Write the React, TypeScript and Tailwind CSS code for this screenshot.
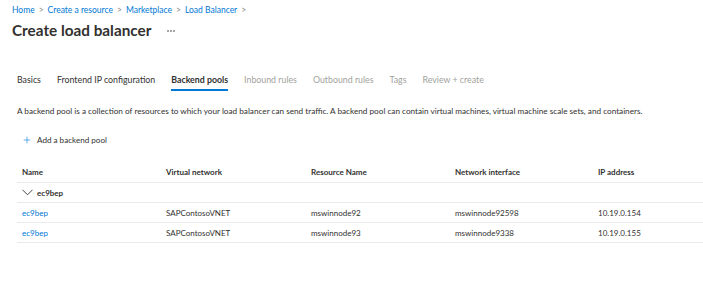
import { Plus } from "lucide-react";

const crumbs = ["Home", "Create a resource", "Marketplace", "Load Balancer"];

const tabs = [
  { label: "Basics", state: "done" },
  { label: "Frontend IP configuration", state: "done" },
  { label: "Backend pools", state: "active" },
  { label: "Inbound rules", state: "off" },
  { label: "Outbound rules", state: "off" },
  { label: "Tags", state: "off" },
  { label: "Review + create", state: "off" },
];

const rows = [
  { name: "ec9bep", vnet: "SAPContosoVNET", resource: "mswinnode92", nic: "mswinnode92598", ip: "10.19.0.154" },
  { name: "ec9bep", vnet: "SAPContosoVNET", resource: "mswinnode93", nic: "mswinnode9338", ip: "10.19.0.155" },
];

const cols = "grid grid-cols-[144px_145px_144px_143px_1fr]";

export default function App() {
  return (
    <div className="h-[300px] w-[703px] overflow-hidden bg-white font-['Lato',sans-serif] text-[#323130]">
      <nav className="flex items-center gap-[4px] px-3 pt-[4px] text-[8.5px] leading-[13px]">
        {crumbs.map((c) => (
          <span key={c} className="flex items-center gap-[4px]">
            <span className="text-[#0078d4]">{c}</span>
            <span className="text-[#8a8886]">&gt;</span>
          </span>
        ))}
      </nav>

      <div className="flex items-center px-3 pt-[2px]">
        <h1 className="text-[15.3px] font-bold leading-[22px]">Create load balancer</h1>
        <span className="ml-[16px] flex gap-[1.5px] pt-[2px]">
          <span className="h-[1.5px] w-[1.5px] rounded-full bg-[#8a8886]" />
          <span className="h-[1.5px] w-[1.5px] rounded-full bg-[#8a8886]" />
          <span className="h-[1.5px] w-[1.5px] rounded-full bg-[#8a8886]" />
        </span>
      </div>

      <div className="mt-[32px] flex gap-[16px] px-[17px] text-[8.8px] leading-[14px]">
        {tabs.map((t) => (
          <div
            key={t.label}
            className={
              t.state === "active"
                ? "border-b-2 border-[#0078d4] pb-[2px] font-bold"
                : t.state === "off"
                  ? "pb-[4px] text-[#a19f9d]"
                  : "pb-[4px]"
            }
          >
            {t.label}
          </div>
        ))}
      </div>

      <p className="mt-[13px] px-[17px] text-[8.2px] leading-[14px]">
        A backend pool is a collection of resources to which your load balancer can send traffic. A backend pool can contain virtual machines, virtual machine scale sets, and containers.
      </p>

      <button type="button" className="ml-[22px] mt-[15px] flex items-center gap-[5px] text-[8.1px] leading-[14px]">
        <Plus className="h-[10px] w-[10px] text-[#0078d4]" strokeWidth={1.4} />
        <span>Add a backend pool</span>
      </button>

      <div className="ml-[17px] mt-[14px] text-[8px]">
        <div className={`${cols} h-[22px] items-center border-b border-[#edebe9] px-[5px] font-bold`}>
          <span>Name</span>
          <span>Virtual network</span>
          <span>Resource Name</span>
          <span>Network interface</span>
          <span>IP address</span>
        </div>
        <div className="flex h-[20px] items-center gap-[4px] border-b border-[#edebe9] px-[5px] font-bold">
          <svg width="11" height="7" viewBox="0 0 11 7" fill="none" stroke="#323130" strokeWidth="0.9">
            <polyline points="0.5,0.8 5.5,5.8 10.5,0.8" />
          </svg>
          <span>ec9bep</span>
        </div>
        {rows.map((r) => (
          <div key={r.resource} className={`${cols} h-[20px] items-center border-b border-[#edebe9] px-[5px]`}>
            <span className="text-[#0078d4]">{r.name}</span>
            <span>{r.vnet}</span>
            <span>{r.resource}</span>
            <span>{r.nic}</span>
            <span>{r.ip}</span>
          </div>
        ))}
      </div>
    </div>
  );
}
